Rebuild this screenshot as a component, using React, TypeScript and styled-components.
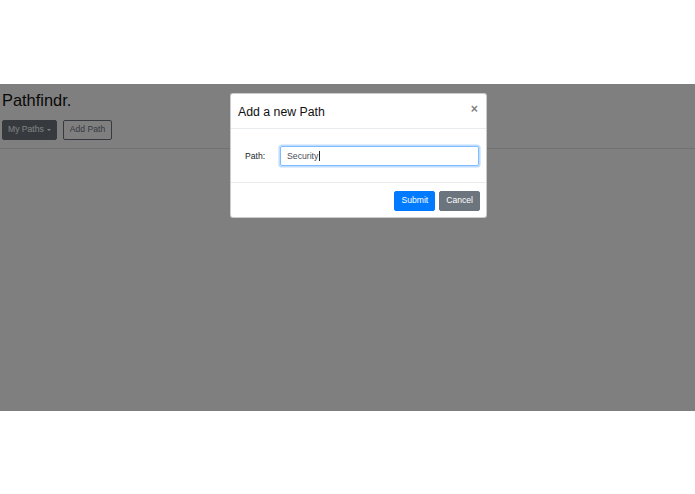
import styled, { createGlobalStyle } from 'styled-components';

const GlobalStyle = createGlobalStyle`
  html, body {
    margin: 0;
    padding: 0;
    background: #fff;
  }
  body {
    font-family: "Liberation Sans", Arial, sans-serif;
    color: #212529;
  }
`;

const Page = styled.div`
  width: 695px;
  height: 494px;
  padding-top: 84px;
  box-sizing: border-box;
  background: #fff;
`;

const Screen = styled.div`
  position: relative;
  height: 327px;
  overflow: hidden;
  background: #fff;
`;

const Header = styled.header`
  display: flex;
  flex-direction: column;
  align-items: flex-start;
  padding: 7px 2px 8px;
  border-bottom: 1px solid #dee2e6;
`;

const Title = styled.h2`
  margin: 0 0 9px;
  font-size: 16.4px;
  font-weight: 500;
  line-height: 1.2;
  color: #111;
`;

const Toolbar = styled.div`
  display: flex;
  gap: 6px;
`;

const Button = styled.button<{ $variant: 'primary' | 'secondary' | 'outline' }>`
  display: inline-flex;
  align-items: center;
  gap: 3px;
  height: 20px;
  padding: 0 ${(p) => (p.$variant === 'outline' ? 6 : 5)}px;
  font-family: inherit;
  font-size: 8.6px;
  line-height: 1;
  border-radius: 2px;
  border: 1px solid
    ${(p) => (p.$variant === 'primary' ? '#007bff' : '#6c757d')};
  background: ${(p) =>
    p.$variant === 'primary' ? '#007bff' : p.$variant === 'secondary' ? '#6c757d' : 'transparent'};
  color: ${(p) => (p.$variant === 'outline' ? '#6c757d' : '#fff')};
  cursor: pointer;
`;

const FooterButton = styled(Button)`
  padding: 0 6px;
`;

const Caret = styled.span`
  width: 0;
  height: 0;
  border-top: 2.5px solid currentColor;
  border-left: 2.5px solid transparent;
  border-right: 2.5px solid transparent;
`;

const Backdrop = styled.div`
  position: absolute;
  inset: 0;
  background: rgba(0, 0, 0, 0.5);
`;

const Modal = styled.div`
  position: absolute;
  top: 9px;
  left: 230px;
  width: 257px;
  box-sizing: border-box;
  background: #fff;
  border: 1px solid rgba(0, 0, 0, 0.2);
  border-radius: 3px;
  display: flex;
  flex-direction: column;
`;

const ModalHeader = styled.div`
  display: flex;
  align-items: center;
  justify-content: space-between;
  height: 34px;
  padding: 0 6px 0 7px;
  border-bottom: 1px solid #e9ecef;
`;

const ModalTitle = styled.h4`
  margin: 2px 0 0;
  font-size: 12.3px;
  font-weight: 500;
  color: #111;
`;

const Close = styled.button`
  margin: -4px 0 0;
  padding: 0 2px;
  border: 0;
  background: transparent;
  font-family: inherit;
  font-size: 12.3px;
  font-weight: 700;
  line-height: 1;
  color: #000;
  opacity: 0.5;
`;

const ModalBody = styled.div`
  display: flex;
  align-items: center;
  height: 53px;
  padding: 0 7px 0 14px;
  border-bottom: 1px solid #e9ecef;
`;

const Label = styled.label`
  width: 35px;
  font-size: 8.6px;
  color: #212529;
`;

const Input = styled.div`
  flex: 1;
  display: flex;
  align-items: center;
  height: 20px;
  box-sizing: border-box;
  padding: 0 6px;
  font-size: 8.7px;
  color: #495057;
  border: 1px solid #80bdff;
  border-radius: 2px;
  box-shadow: 0 0 0 1.6px rgba(0, 123, 255, 0.25);
`;

const Cursor = styled.span`
  display: inline-block;
  width: 1px;
  height: 10px;
  margin-left: 0.5px;
  background: #222;
`;

const ModalFooter = styled.div`
  display: flex;
  justify-content: flex-end;
  align-items: center;
  gap: 4px;
  height: 33px;
  padding: 1px 6px 0;
`;

export default function App() {
  return (
    <>
      <GlobalStyle />
      <Page>
        <Screen>
          <Header>
            <Title>Pathfindr.</Title>
            <Toolbar>
              <Button $variant="secondary">
                My Paths <Caret />
              </Button>
              <Button $variant="outline">Add Path</Button>
            </Toolbar>
          </Header>
          <Backdrop />
          <Modal>
            <ModalHeader>
              <ModalTitle>Add a new Path</ModalTitle>
              <Close>×</Close>
            </ModalHeader>
            <ModalBody>
              <Label>Path:</Label>
              <Input>
                Security
                <Cursor />
              </Input>
            </ModalBody>
            <ModalFooter>
              <FooterButton $variant="primary">Submit</FooterButton>
              <FooterButton $variant="secondary">Cancel</FooterButton>
            </ModalFooter>
          </Modal>
        </Screen>
      </Page>
    </>
  );
}
